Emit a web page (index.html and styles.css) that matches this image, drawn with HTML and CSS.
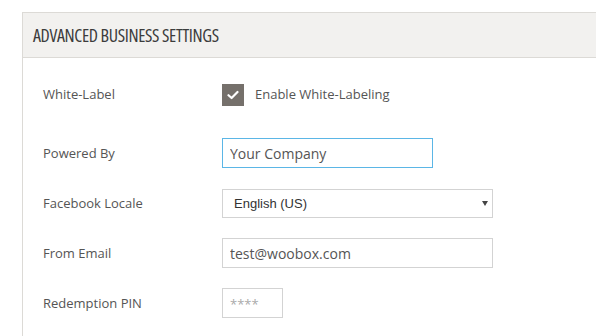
FILE: index.html
```html
<!DOCTYPE html>
<html lang="en">
<head>
    <meta charset="UTF-8" />
    <title>Advanced Business Settings</title>
    <link rel="stylesheet" href="styles.css">
</head>
<body>
    <div class="panel">
        <div class="panel-head">
            <h2>ADVANCED BUSINESS SETTINGS</h2>
        </div>

        <div class="panel-body">
            <div class="row row-check">
                <label class="label">White-Label</label>
                <div class="check-wrap">
                    <span class="checkbox">
                        <svg width="12" height="10" viewBox="0 0 12 10">
                            <path d="M1.5 5.2 L4.6 8 L10.5 2" fill="none" stroke="#fff" stroke-width="2.2" stroke-linecap="round" stroke-linejoin="round"/>
                        </svg>
                    </span>
                    <span class="check-text">Enable White-Labeling</span>
                </div>
            </div>

            <div class="row">
                <label class="label" for="powered">Powered By</label>
                <input type="text" id="powered" class="field field-focus" value="Your Company" />
            </div>

            <div class="row">
                <label class="label" for="locale">Facebook Locale</label>
                <div class="select-wrap">
                    <select id="locale" class="field field-select">
                        <option>English (US)</option>
                    </select>
                </div>
            </div>

            <div class="row">
                <label class="label" for="email">From Email</label>
                <input type="text" id="email" class="field field-wide" value="test@woobox.com" />
            </div>

            <div class="row">
                <label class="label" for="pin">Redemption PIN</label>
                <input type="text" id="pin" class="field field-pin" placeholder="****" />
            </div>
        </div>
    </div>
</body>
</html>
```

FILE: styles.css
```css
html, body {
    height: 100%;
}

body {
    margin: 0;
    background: #fff;
    font-family: "Open Sans", Arial, sans-serif;
    overflow: hidden;
}

.panel {
    box-sizing: border-box;
    margin: 12px 0 0 22px;
    height: calc(100% - 12px);
    border: 1px solid #dcdad6;
    border-right: none;
    border-bottom: none;
}

.panel-head {
    background: #f2f1ef;
    border-bottom: 1px solid #dcdad6;
    height: 44px;
    display: flex;
    align-items: center;
    padding-left: 10px;
}

.panel-head h2 {
    margin: 0;
    font-family: "Open Sans", sans-serif;
    font-stretch: 75%;
    font-weight: 400;
    font-size: 18px;
    color: #3c3c3c;
    letter-spacing: -0.35px;
}

.panel-body {
    padding: 26px 0 0 20px;
    display: flex;
    flex-direction: column;
    gap: 20px;
}

.row {
    display: flex;
    align-items: center;
    height: 30px;
}

.row-check {
    height: 22px;
    margin-bottom: 12px;
}

.label {
    width: 179px;
    font-size: 13px;
    color: #555;
}

.row-check .label {
    margin-top: -3px;
}

.check-wrap {
    display: flex;
    align-items: center;
    gap: 11px;
}

.checkbox {
    width: 22px;
    height: 22px;
    background: #75706b;
    display: flex;
    align-items: center;
    justify-content: center;
}

.check-text {
    font-size: 13px;
    color: #555;
    margin-top: -3px;
}

.field {
    box-sizing: border-box;
    height: 30px;
    border: 1px solid #d3d3d3;
    background: #fff;
    padding: 0 7px;
    font-family: "Open Sans", sans-serif;
    font-size: 14px;
    color: #555;
    outline: none;
    margin: 0;
}

.field-focus {
    width: 211px;
    border-color: #5bb6e6;
}

.field-wide {
    width: 271px;
}

.field-pin {
    width: 61px;
}

.field-pin::placeholder {
    color: #aaa;
    font-size: 13px;
}

.select-wrap {
    position: relative;
}

.field-select {
    width: 271px;
    height: 29px;
    appearance: none;
    -webkit-appearance: none;
    border-radius: 0;
    padding: 0 11px;
    font-family: "Liberation Sans", Arial, sans-serif;
    font-size: 13px;
    color: #333;
}

.select-wrap::after {
    content: "";
    position: absolute;
    right: 5px;
    top: 12px;
    border-left: 3px solid transparent;
    border-right: 3px solid transparent;
    border-top: 5px solid #444;
}
```
